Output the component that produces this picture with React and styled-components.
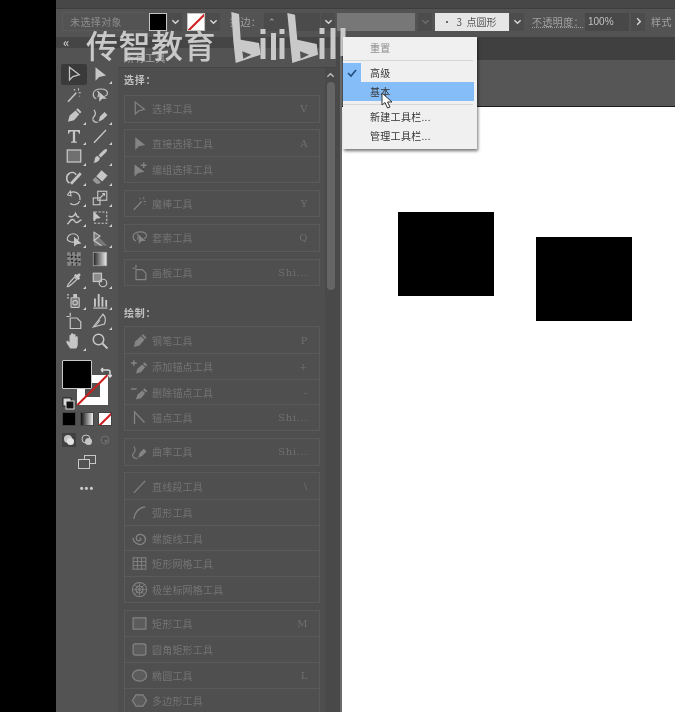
import React from 'react';
import styled, { createGlobalStyle } from 'styled-components';

const Global = createGlobalStyle`
    html, body { margin: 0; padding: 0; background: #000; }
    * { box-sizing: border-box; }
`;

const Page = styled.div`
    width: 675px;
    height: 712px;
    overflow: hidden;
    position: relative;
    padding-left: 56px;
    background: #000;
    font-family: "Noto Sans CJK SC", "Noto Sans", sans-serif;
    filter: blur(0.35px);
`;

const Main = styled.div`
    height: 100%;
    display: flex;
    flex-direction: column;
    background: #535353;
`;

const TopStrip = styled.div`
    height: 9px;
    background: #474747;
    border-bottom: 1px solid #3e3e3e;
`;

const ControlBar = styled.div`
    height: 28px;
    flex-shrink: 0;
    display: flex;
    align-items: center;
    padding: 0 0 3px 6px;
    background: #535353;
    font-size: 10px;
    color: #a2a2a2;
`;

const ObjectLabel = styled.div`
    width: 85px;
    height: 19px;
    margin-right: 4px;
    padding-left: 7px;
    line-height: 18px;
    color: #8e8e8e;
    letter-spacing: 0.4px;
    border: 1px solid #5a5a5a;
    border-right: none;
`;

const Swatch = styled.div`
    width: 18px;
    height: 18px;
    flex-shrink: 0;
    border: 1px solid #c4c4c4;
    background: ${p => p.$color};
    position: relative;
    overflow: hidden;
    margin-left: ${p => p.$ml || 0}px;
`;

const Slash = styled.div`
    position: absolute;
    left: -4px;
    right: -4px;
    top: 50%;
    height: 2px;
    background: #d01f1f;
    transform: rotate(-45deg);
`;

const ChevronBox = styled.div`
    width: 14px;
    height: 18px;
    flex-shrink: 0;
    margin-left: ${p => p.$ml || 1}px;
    display: flex;
    align-items: center;
    justify-content: center;
    background: #4c4c4c;
    color: ${p => (p.$dim ? '#6d6d6d' : '#d6d6d6')};
`;

const BarLabel = styled.div`
    width: ${p => p.$w}px;
    margin-left: ${p => p.$ml}px;
    flex-shrink: 0;
    white-space: nowrap;
    letter-spacing: 0.4px;
    text-decoration: ${p => (p.$under ? 'underline dotted' : 'none')};
`;

const StrokeInput = styled.div`
    width: 56px;
    height: 18px;
    margin-left: 4px;
    flex-shrink: 0;
    padding-left: 4px;
    background: #4b4b4b;
    color: #b4b4b4;
    font-size: 9px;
    line-height: 17px;
`;

const BrushField = styled.div`
    width: 78px;
    height: 18px;
    margin-left: 2px;
    flex-shrink: 0;
    background: #777;
`;

const CapBox = styled.div`
    width: 74px;
    height: 18px;
    margin-left: 3px;
    flex-shrink: 0;
    padding-left: 7px;
    line-height: 17px;
    background: #e6e6e6;
    color: #555;
    white-space: pre;
`;

const OpacityInput = styled.div`
    width: 44px;
    height: 18px;
    margin-left: 4px;
    flex-shrink: 0;
    padding-left: 3px;
    line-height: 17px;
    background: #484848;
    color: #c0c0c0;
    font-family: "Liberation Sans", sans-serif;
    font-size: 10px;
`;

const Workspace = styled.div`
    flex: 1;
    min-height: 0;
    display: flex;
`;

const Toolbar = styled.div`
    width: 62px;
    flex-shrink: 0;
    display: flex;
    flex-direction: column;
    align-items: center;
    background: #535353;
`;

const DarkHeader = styled.div`
    width: 100%;
    height: 11px;
    flex-shrink: 0;
    padding-left: 7px;
    font-size: 12px;
    font-weight: 700;
    line-height: 9px;
    color: #c4c4c4;
    background: #454545;
`;

const ToolGrid = styled.div`
    margin-top: 16px;
    display: grid;
    grid-template-columns: 26px 26px;
    grid-auto-rows: 20.55px;
    column-gap: 0;
    width: 52px;
`;

const ToolCell = styled.div`
    position: relative;
    display: flex;
    align-items: center;
    justify-content: center;
    color: #c6c6c6;
    background: ${p => (p.$active ? '#3a3a3a' : 'transparent')};
    border-radius: 2px;
    &::after {
        content: '';
        display: ${p => (p.$more ? 'block' : 'none')};
        position: absolute;
        right: 1px;
        bottom: 1px;
        border-left: 3px solid transparent;
        border-bottom: 3px solid #cfcfcf;
    }
`;

const ColorWell = styled.div`
    position: relative;
    margin-top: 8px;
    width: 50px;
    height: 50px;
`;

const FillBox = styled.div`
    position: absolute;
    left: 0;
    top: 0;
    width: 30px;
    height: 29px;
    background: #000;
    border: 1px solid #c9c9c9;
    border-radius: 1px;
    z-index: 1;
`;

const StrokeBox = styled.div`
    position: absolute;
    left: 15px;
    top: 15px;
    width: 31px;
    height: 30px;
    background: #fff;
    overflow: hidden;
`;

const StrokeHole = styled.div`
    position: absolute;
    left: 8px;
    top: 8px;
    width: 15px;
    height: 14px;
    background: #535353;
`;

const LongSlash = styled.div`
    position: absolute;
    left: -6px;
    right: -6px;
    top: 14px;
    height: 2px;
    background: #c8201f;
    transform: rotate(-45deg);
`;

const SwapIcon = styled.div`
    position: absolute;
    left: 38px;
    top: 0;
    color: #d8d8d8;
`;

const DefaultIcon = styled.div`
    position: absolute;
    left: 0;
    top: 31px;
    color: #e0e0e0;
`;

const ModeRow = styled.div`
    display: flex;
    gap: 4px;
    margin-top: ${p => p.$mt}px;
`;

const ModeCell = styled.div`
    width: 14px;
    height: 14px;
    position: relative;
    overflow: hidden;
    display: flex;
    align-items: center;
    justify-content: center;
    color: ${p => (p.$dim ? '#6f6f6f' : '#c6c6c6')};
    border: ${p => (p.$plain ? 'none' : '1px solid #444')};
    background: ${p => p.$bg || 'transparent'};
`;

const ScreenMode = styled.div`
    width: 20px;
    height: 16px;
    color: #c6c6c6;
    line-height: 0;
`;

const Dots = styled.div`
    margin-top: 13px;
    font-size: 11px;
    font-weight: 700;
    letter-spacing: 1px;
    line-height: 10px;
    color: #c8c8c8;
    font-family: "Liberation Sans", sans-serif;
`;

const Panel = styled.div`
    width: 218px;
    flex-shrink: 0;
    display: flex;
    flex-direction: column;
    overflow: hidden;
    background: #4e4e4e;
`;

const PanelTitle = styled.div`
    height: 20px;
    flex-shrink: 0;
    padding-left: 6px;
    font-size: 10px;
    line-height: 19px;
    color: #a8a8a8;
    letter-spacing: 0.5px;
    background: #535353;
    border-bottom: 1px solid #444;
`;

const PanelBody = styled.div`
    flex: 1;
    min-height: 0;
    display: flex;
`;

const ToolList = styled.div`
    width: 207px;
    padding: 4px 0 0 6px;
    flex-shrink: 0;
`;

const SectionLabel = styled.div`
    height: ${p => p.$h}px;
    margin-top: ${p => p.$mt || 0}px;
    font-size: 10px;
    font-weight: 700;
    line-height: 16px;
    letter-spacing: 0.8px;
    color: #c2c2c2;
`;

const RowGroup = styled.div`
    width: 196px;
    margin-bottom: 6.8px;
    border: 1px solid #5a5a5a;
    background: #4f4f4f;
`;

const Row = styled.div`
    height: 25.7px;
    display: flex;
    align-items: center;
    padding: 0 11px 0 6px;
    color: #848484;
    border-top: ${p => (p.$first ? 'none' : '1px solid #5a5a5a')};
`;

const RowIcon = styled.div`
    width: 21px;
    flex-shrink: 0;
    display: flex;
    align-items: center;
`;

const RowName = styled.div`
    flex: 1;
    font-size: 10px;
    letter-spacing: 0.2px;
    color: #747474;
`;

const RowKey = styled.div`
    font-size: 10px;
    color: #6f6f6f;
    letter-spacing: 0.6px;
    font-family: "DejaVu Serif", serif;
`;

const ScrollTrack = styled.div`
    width: 11px;
    flex-shrink: 0;
    display: flex;
    flex-direction: column;
    align-items: center;
    color: #bcbcbc;
    padding-top: 3px;
    background: #494949;
`;

const ScrollThumb = styled.div`
    width: 8px;
    height: 208px;
    margin-top: 2px;
    background: #656565;
    border-radius: 4px;
`;

const Gutter = styled.div`
    width: 6px;
    flex-shrink: 0;
    background: #494949;
    border-right: 2px solid #6a6a6a;
`;

const Doc = styled.div`
    flex: 1;
    display: flex;
    flex-direction: column;
`;

const TabBar = styled.div`
    height: 23px;
    flex-shrink: 0;
    background: #404040;
`;

const Ruler = styled.div`
    height: 47px;
    flex-shrink: 0;
    background: #565656;
    border-bottom: 1px solid #1c1c1c;
`;

const Canvas = styled.div`
    flex: 1;
    position: relative;
    background: #fff;
`;

const Square = styled.div`
    position: absolute;
    left: ${p => p.$x}px;
    top: ${p => p.$y}px;
    width: 96px;
    height: 84px;
    background: #000;
`;

const Watermark = styled.div`
    position: absolute;
    left: 86px;
    top: 22px;
    font-size: 32px;
    line-height: 44px;
    font-weight: 500;
    letter-spacing: 0.5px;
    color: #c9c9c9;
    white-space: nowrap;
`;

const LogoWrap = styled.div`
    position: absolute;
    left: 226px;
    top: 11px;
    color: #c9c9c9;
    line-height: 0;
`;

const Menu = styled.div`
    position: absolute;
    left: 343px;
    top: 37px;
    width: 134px;
    height: 112px;
    padding-top: 1px;
    background: #f0f0f0;
    box-shadow: 1px 2px 3px rgba(0, 0, 0, 0.55);
    font-size: 10px;
    color: #333;
`;

const MenuItem = styled.div`
    height: 19px;
    width: 131px;
    display: flex;
    align-items: center;
    padding-left: 27px;
    position: relative;
    letter-spacing: 0.3px;
    color: ${p => (p.$muted ? '#8d8d8d' : '#333')};
    background: ${p => (p.$hover ? '#84bdf7' : 'transparent')};
`;

const CheckCell = styled.div`
    position: absolute;
    left: 0;
    top: 0;
    width: 18px;
    height: 19px;
    display: flex;
    align-items: center;
    justify-content: center;
    background: #84bdf7;
    color: #234f80;
`;

const MenuLine = styled.div`
    height: 1px;
    margin: 3px 4px 2px 0;
    background: #d6d6d6;
`;

const Cursor = styled.div`
    position: absolute;
    left: 381px;
    top: 92px;
    line-height: 0;
`;

const icons = {
    select: <path d="M6 3v17l4.5-4.5L19 13z" fill="none" stroke="currentColor" strokeWidth="1.7" />,
    direct: <path d="M6 3v18l5-5 9-2z" fill="currentColor" />,
    group: <g fill="currentColor"><path d="M5 5v17l5-5 9-2z" /><path d="M17 2h2v3h3v2h-3v3h-2V7h-3V5h3z" /></g>,
    wand: <g stroke="currentColor" strokeWidth="2" fill="none"><path d="M4 21 15 9" /><path d="M18 3v3M21 9h-3M12 4l1.5 2M20 14l-1-1" strokeWidth="1.4" /></g>,
    lasso: <g><path d="M3 11c0-5 5-7 10-7s9 2 9 6c0 2-2 3-4 4M7 17c-3-1-4-3-4-6M8 7c3 0 3 4 1 8" fill="none" stroke="currentColor" strokeWidth="1.6" /><path d="M11 8v13l4-4 6 0z" fill="currentColor" /></g>,
    pen: <g fill="currentColor"><path d="M4 21l2-8 8-7 5 5-7 8z" /><path d="M15 5l2-2 5 5-2 2z" /></g>,
    addPen: <g fill="currentColor"><path d="M7 22l2-7 7-6 4 4-6 7z" /><path d="M17 8l2-2 4 4-2 2z" /><path d="M3 3h2v3h3v2H5v3H3V8H0V6h3z" /></g>,
    delPen: <g fill="currentColor"><path d="M7 22l2-7 7-6 4 4-6 7z" /><path d="M17 8l2-2 4 4-2 2z" /><path d="M0 6h8v2H0z" /></g>,
    anchor: <path d="M5 21V4l14 15" fill="none" stroke="currentColor" strokeWidth="1.8" />,
    curve: <g><path d="M10 21l2-7 6-6 4 4-6 6z" fill="currentColor" /><path d="M9 22c-7 0-8-5-5-8s2-6 0-9" fill="none" stroke="currentColor" strokeWidth="1.6" /></g>,
    text: <path d="M4 4h16v5h-1.5c-.3-2-1-3-3-3H13.500v13l2.500.500V21H8v-1.500l2.500-.500V6H8.500c-2 0-2.700 1-3 3H4z" fill="currentColor" />,
    line: <path d="M4 21 20 4" stroke="currentColor" strokeWidth="1.8" />,
    arc: <path d="M4 21C5 12 11 5 20 4" fill="none" stroke="currentColor" strokeWidth="1.8" />,
    spiral: <path d="M12 12c2-1 3 2 0 3s-6-2-4-6 10-4 12 2-4 11-10 9-7-7-7-9" fill="none" stroke="currentColor" strokeWidth="1.8" />,
    gridTool: <g fill="none" stroke="currentColor" strokeWidth="1.4"><rect x="3" y="4" width="18" height="16" /><path d="M3 9.300h18M3 14.600h18M9 4v16M15 4v16" /></g>,
    polar: <g fill="none" stroke="currentColor" strokeWidth="1.5"><circle cx="12" cy="12" r="10" /><circle cx="12" cy="12" r="5" /><path d="M12 2v20M2 12h20M5 5l14 14M19 5 5 19" strokeWidth="1" /></g>,
    rect: <rect x="3" y="4" width="18" height="16" fill="currentColor" fillOpacity="0.25" stroke="currentColor" strokeWidth="1.7" />,
    round: <rect x="3" y="4" width="18" height="16" rx="3" fill="currentColor" fillOpacity="0.25" stroke="currentColor" strokeWidth="1.7" />,
    ellipse: <ellipse cx="12" cy="12" rx="10" ry="8" fill="currentColor" fillOpacity="0.25" stroke="currentColor" strokeWidth="1.7" />,
    polygon: <path d="M7 4h10l5 8-5 8H7l-5-8z" fill="currentColor" fillOpacity="0.25" stroke="currentColor" strokeWidth="1.7" />,
    brush: <g fill="currentColor"><path d="M21 3c1 1 0 3-2 5l-6 6-3-3 6-6c2-2 4-3 5-2z" /><path d="M9 12l3 3c-1 4-5 6-9 6 2-2 2-4 2-5 0-2 2-4 4-4z" /></g>,
    shaper: <g fill="none" stroke="currentColor" strokeWidth="2"><path d="M6 20C1 17 1 10 6 7c3-2 7-1 9 2" /><path d="M8 21 21 7" strokeWidth="3.500" /></g>,
    eraser: <g fill="currentColor"><path d="M14 3l8 7-7 8-8-7z" /><path d="M6 12l7 7-2 2H7l-5-5z" fillOpacity="0.6" /></g>,
    rotate: <path d="M7 5c5-3 13 0 13 8s-9 10-13 6M3 8l4-5 1 6z" fill="none" stroke="currentColor" strokeWidth="1.6" strokeDasharray="20 1.5" />,
    scale: <g fill="none" stroke="currentColor" strokeWidth="1.5"><rect x="9" y="3" width="12" height="12" /><rect x="3" y="12" width="9" height="9" /><path d="M12 12l6-6M15 6h3v3" /></g>,
    warp: <g fill="none" stroke="currentColor" strokeWidth="2"><path d="M3 20c4-2 3-6 7-6s2 5 6 4 3-4 6-3M5 9c3 3 7 1 9-3 1 3 2 5 5 5" /></g>,
    free: <g><path d="M5 4h16v15H5z" fill="none" stroke="currentColor" strokeWidth="1.5" strokeDasharray="3 2" /><path d="M3 3v13l4-3 6-1z" fill="currentColor" /></g>,
    builder: <g><path d="M3 12c0-4 4-7 8-7s7 3 7 6-5 6-9 5-6-1-6-4z" fill="none" stroke="currentColor" strokeWidth="1.5" /><path d="M12 9v13l4-3 6-1z" fill="currentColor" /></g>,
    perspective: <g><path d="M4 3l18 18H4z" fill="currentColor" fillOpacity="0.3" /><path d="M4 3v11l8-6zM4 14l10 7" fill="none" stroke="currentColor" strokeWidth="1.5" /></g>,
    mesh: <g><rect x="3" y="3" width="18" height="18" fill="currentColor" fillOpacity="0.45" /><path d="M3 9c6-3 12 3 18 0M3 15c6-3 12 3 18 0M9 3c-3 6 3 12 0 18M15 3c-3 6 3 12 0 18" fill="none" stroke="#2b2b2b" strokeWidth="1.8" strokeDasharray="3 2" /></g>,
    gradient: <g><defs><linearGradient id="grad"><stop offset="0" stopColor="#222" /><stop offset="1" stopColor="#eee" /></linearGradient></defs><rect x="3" y="3" width="18" height="18" fill="url(#grad)" stroke="#aaa" strokeWidth="1" /></g>,
    dropper: <g><path d="M3 21c0-3 8-11 10-13l3 3C14 13 6 21 3 21z" fill="none" stroke="currentColor" strokeWidth="1.5" /><path d="M12 6l6 6 2-2-1-2 2-3-2-2-3 2-2-1z" fill="currentColor" /></g>,
    blend: <g fill="none" stroke="currentColor" strokeWidth="1.6"><rect x="3" y="3" width="11" height="11" fill="currentColor" fillOpacity="0.5" /><circle cx="16" cy="16" r="5" /></g>,
    spray: <g><rect x="8" y="9" width="11" height="13" rx="1" fill="currentColor" fillOpacity="0.3" stroke="currentColor" strokeWidth="1.4" /><rect x="11" y="4" width="5" height="5" fill="currentColor" /><circle cx="13.500" cy="15.500" r="3" fill="none" stroke="currentColor" strokeWidth="1.4" /><path d="M3 4h2v2H3zM3 8h2v2H3z" fill="currentColor" /></g>,
    graph: <g fill="currentColor"><path d="M3 22h19v1.500H3z" /><path d="M4 10h2.500v11H4zM9 4h2.500v17H9zM14 8h2.500v13H14zM19 12h2.500v9H19z" /></g>,
    artboard: <g fill="none" stroke="currentColor" strokeWidth="1.6"><path d="M7 8h9l5 5v9H7z" /><path d="M7 1v5M2 6h4" /></g>,
    slice: <g><path d="M3 20 16 3c3 3 4 8 2 13z" fill="none" stroke="currentColor" strokeWidth="1.6" /><path d="M5 20l7-9" stroke="currentColor" strokeWidth="1.4" /></g>,
    hand: <path d="M7 22c-2-3-6-8-5-10 1-1 3 0 4 2V5c0-2 2-2 2 0v5-7c0-2 3-2 3 0v7-6c0-2 3-2 3 0v7-4c0-2 3-2 3 0v9c0 3-1 5-2 6z" fill="currentColor" />,
    zoom: <g fill="none" stroke="currentColor" strokeWidth="2"><circle cx="10" cy="10" r="7" /><path d="M15 15l7 7" strokeWidth="2.500" /></g>,
};

const Icon = ({ name, size = 18 }) => (
    <svg width={size} height={size} viewBox="0 0 24 24">{icons[name]}</svg>
);

const Chevron = ({ dir = 'down' }) => (
    <svg width="9" height="9" viewBox="0 0 10 10" fill="none" stroke="currentColor" strokeWidth="1.6">
        <path d={dir === 'down' ? 'M1.500 3.500 5 7l3.500-3.500' : dir === 'up' ? 'M1.500 6.500 5 3l3.500 3.500' : 'M3.500 1.500 7 5 3.500 8.500'} />
    </svg>
);

// the video site's logo, traced by eye from the crop
const BiliLogo = () => (
    <svg width="124" height="60" viewBox="0 0 124 60">
        <path fill="currentColor" fillRule="evenodd" d="M5.300 1 13 3l1.700 25.700L33 32l1.700 11.700L9.700 52 7.300 30zM16.300 40.300l1 7.400 8-4z" />
        <path fill="currentColor" fillRule="evenodd" d="M61.300 2 69 3.700l2.300 25L90.700 33l1.300 10.700L66.300 52 64 30zM74 40.300l.7 7.400 8.300-4z" />
        <path stroke="currentColor" strokeWidth="5" d="M37 18v5M37 27v21M47.500 22v27M56 18v5M56 27v21M96 17v6M96 27v21M107 17v31M117 17v28" />
    </svg>
);

const toolCells = [
    ['select', false], ['direct', true],
    ['wand', false], ['lasso', false],
    ['pen', true], ['curve', true],
    ['text', true], ['line', true],
    ['rect', true], ['brush', true],
    ['shaper', true], ['eraser', true],
    ['rotate', true], ['scale', true],
    ['warp', true], ['free', true],
    ['builder', true], ['perspective', true],
    ['mesh', false], ['gradient', false],
    ['dropper', true], ['blend', true],
    ['spray', true], ['graph', true],
    ['artboard', false], ['slice', true],
    ['hand', true], ['zoom', false],
];

const selectGroups = [
    [['select', '选择工具', 'V']],
    [['direct', '直接选择工具', 'A'], ['group', '编组选择工具', '']],
    [['wand', '魔棒工具', 'Y']],
    [['lasso', '套索工具', 'Q']],
    [['artboard', '画板工具', 'Shi...']],
];

const drawGroups = [
    [['pen', '钢笔工具', 'P'], ['addPen', '添加锚点工具', '+'], ['delPen', '删除锚点工具', '-'], ['anchor', '锚点工具', 'Shi...']],
    [['curve', '曲率工具', 'Shi...']],
    [['line', '直线段工具', '\\'], ['arc', '弧形工具', ''], ['spiral', '螺旋线工具', ''], ['gridTool', '矩形网格工具', ''], ['polar', '极坐标网格工具', '']],
    [['rect', '矩形工具', 'M'], ['round', '圆角矩形工具', ''], ['ellipse', '椭圆工具', 'L'], ['polygon', '多边形工具', '']],
];

const Groups = ({ groups }) => groups.map((group, i) => (
    <RowGroup key={i}>
        {group.map(([icon, name, key], j) => (
            <Row key={name} $first={j === 0}>
                <RowIcon><Icon name={icon} size={17} /></RowIcon>
                <RowName>{name}</RowName>
                <RowKey>{key}</RowKey>
            </Row>
        ))}
    </RowGroup>
));

const App = () => {
    return (
        <React.Fragment>
            <Global />
            <Page>
                <Main>
                    <TopStrip />
                    <ControlBar>
                        <ObjectLabel>未选择对象</ObjectLabel>
                        <Swatch $color="#000" />
                        <ChevronBox><Chevron /></ChevronBox>
                        <Swatch $color="#fff" $ml={5}><Slash /></Swatch>
                        <ChevronBox><Chevron /></ChevronBox>
                        <BarLabel $w={30} $ml={10}>描边：</BarLabel>
                        <StrokeInput>⌃</StrokeInput>
                        <ChevronBox $ml={1}><Chevron /></ChevronBox>
                        <BrushField />
                        <ChevronBox $ml={3} $dim><Chevron /></ChevronBox>
                        <CapBox>•  3  点圆形</CapBox>
                        <ChevronBox><Chevron /></ChevronBox>
                        <BarLabel $w={49} $ml={8} $under>不透明度：</BarLabel>
                        <OpacityInput>100%</OpacityInput>
                        <ChevronBox $ml={2}><Chevron dir="right" /></ChevronBox>
                        <BarLabel $w={24} $ml={6}>样式</BarLabel>
                    </ControlBar>
                    <Workspace>
                        <Toolbar>
                            <DarkHeader>«</DarkHeader>
                            <ToolGrid>
                                {toolCells.map(([name, more], i) => (
                                    <ToolCell key={name + i} $more={more} $active={i === 0}>
                                        <Icon name={name} />
                                    </ToolCell>
                                ))}
                            </ToolGrid>
                            <ColorWell>
                                <FillBox />
                                <StrokeBox>
                                    <StrokeHole />
                                    <LongSlash />
                                </StrokeBox>
                                <SwapIcon>
                                    <svg width="12" height="12" viewBox="0 0 12 12" fill="none" stroke="currentColor" strokeWidth="1.5">
                                        <path d="M2 3h6c1.500 0 2 1 2 2v5M1 3l2-2M1 3l2 2M8 8l2 2 2-2" />
                                    </svg>
                                </SwapIcon>
                                <DefaultIcon>
                                    <svg width="13" height="13" viewBox="0 0 13 13">
                                        <rect x="1" y="1" width="8" height="8" fill="#d8d8d8" stroke="#222" />
                                        <rect x="4" y="4" width="8" height="8" fill="#111" stroke="#ddd" />
                                    </svg>
                                </DefaultIcon>
                            </ColorWell>
                            <ModeRow $mt={2}>
                                <ModeCell $bg="#000" />
                                <ModeCell $bg="linear-gradient(90deg, #111, #eee)" />
                                <ModeCell $bg="#fff"><Slash /></ModeCell>
                            </ModeRow>
                            <ModeRow $mt={7}>
                                <ModeCell $plain $bg="#414141">
                                    <svg width="12" height="12" viewBox="0 0 12 12"><circle cx="5" cy="5" r="4" fill="#c8c8c8" /><circle cx="7.500" cy="7.500" r="3.500" fill="#e4e4e4" /></svg>
                                </ModeCell>
                                <ModeCell $plain>
                                    <svg width="12" height="12" viewBox="0 0 12 12"><circle cx="5" cy="5" r="4" fill="none" stroke="currentColor" /><circle cx="7.500" cy="7.500" r="3.500" fill="currentColor" /></svg>
                                </ModeCell>
                                <ModeCell $plain $dim>
                                    <svg width="12" height="12" viewBox="0 0 12 12"><circle cx="6" cy="6" r="4" fill="none" stroke="currentColor" /><circle cx="7" cy="7" r="1.500" fill="currentColor" /></svg>
                                </ModeCell>
                            </ModeRow>
                            <ModeRow $mt={7}>
                                <ScreenMode>
                                    <svg width="20" height="16" viewBox="0 0 20 16" fill="none" stroke="currentColor">
                                        <rect x="7.500" y="1.500" width="11" height="8" />
                                        <rect x="1.500" y="5.500" width="11" height="9" fill="#535353" />
                                    </svg>
                                </ScreenMode>
                            </ModeRow>
                            <Dots>•••</Dots>
                        </Toolbar>
                        <Panel>
                            <DarkHeader />
                            <PanelTitle>所有工具</PanelTitle>
                            <PanelBody>
                                <ToolList>
                                    <SectionLabel $h={23}>选择：</SectionLabel>
                                    <Groups groups={selectGroups} />
                                    <SectionLabel $h={21} $mt={19}>绘制：</SectionLabel>
                                    <Groups groups={drawGroups} />
                                </ToolList>
                                <ScrollTrack>
                                    <Chevron dir="up" />
                                    <ScrollThumb />
                                </ScrollTrack>
                            </PanelBody>
                        </Panel>
                        <Gutter />
                        <Doc>
                            <TabBar />
                            <Ruler />
                            <Canvas>
                                <Square $x={56} $y={105} />
                                <Square $x={194} $y={130} />
                            </Canvas>
                        </Doc>
                    </Workspace>
                </Main>
                <Watermark>传智教育</Watermark>
                <LogoWrap><BiliLogo /></LogoWrap>
                <Menu>
                    <MenuItem $muted>重置</MenuItem>
                    <MenuLine />
                    <MenuItem>
                        <CheckCell>
                            <svg width="10" height="10" viewBox="0 0 10 10" fill="none" stroke="currentColor" strokeWidth="1.6"><path d="M1 5l3 3 5-6" /></svg>
                        </CheckCell>
                        高级
                    </MenuItem>
                    <MenuItem $hover>基本</MenuItem>
                    <MenuLine />
                    <MenuItem>新建工具栏...</MenuItem>
                    <MenuItem>管理工具栏...</MenuItem>
                </Menu>
                <Cursor>
                    <svg width="13" height="17" viewBox="0 0 13 17">
                        <path d="M1 1v12l3-2.500L6.500 16l2.500-1-2.500-5H11z" fill="#fff" stroke="#333" strokeWidth="1" />
                    </svg>
                </Cursor>
            </Page>
        </React.Fragment>
    );
};

export default App;
